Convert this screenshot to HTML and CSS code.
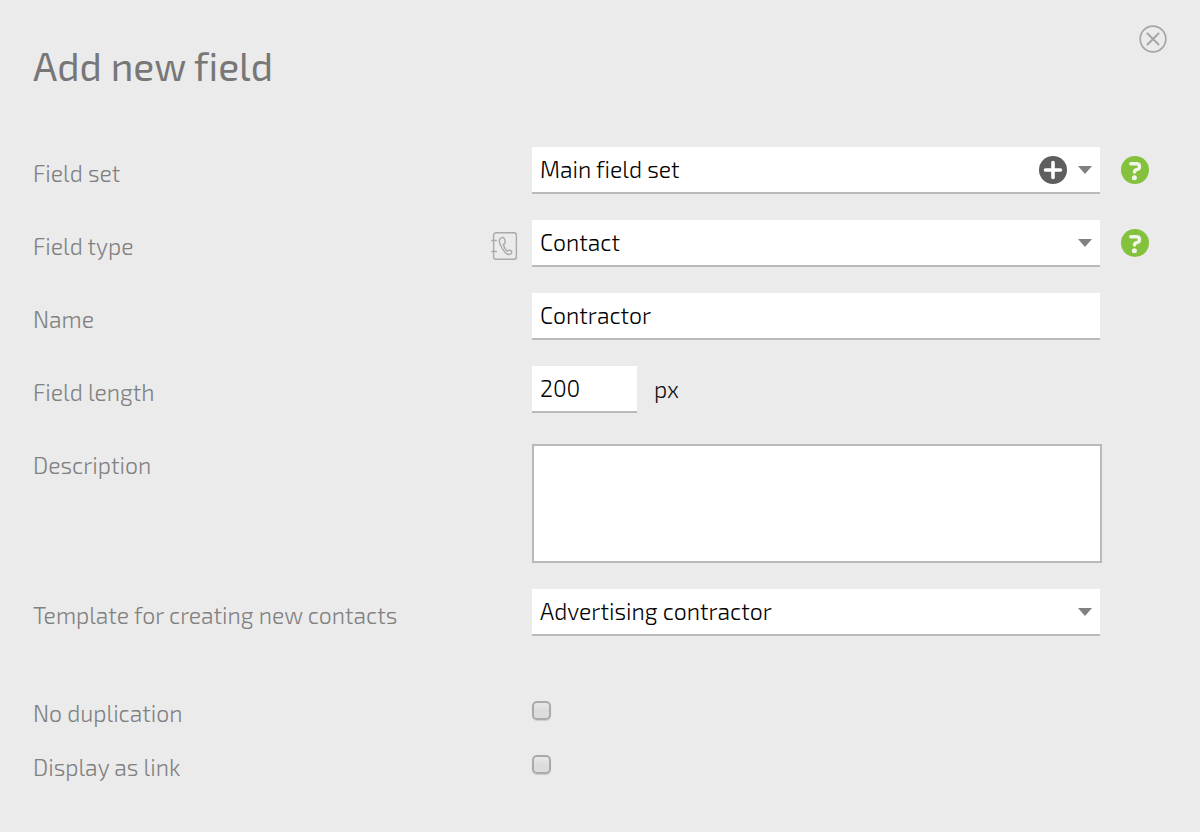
FILE: index.html
```html
<!DOCTYPE html>
<html lang="en">
<head>
<meta charset="utf-8">
<meta name="viewport" content="width=device-width, initial-scale=1">
<title>Add new field</title>
<link rel="stylesheet" href="styles.css">
</head>
<body>
<main class="dialog">
  <header class="dialog-header">
    <h1 class="dialog-title">Add new field</h1>
    <button class="icon-button" type="button" aria-label="Close">
      <svg width="28" height="28" viewBox="0 0 28 28" fill="none" stroke="#a6a6a6"><circle cx="14" cy="14" r="12.8" stroke-width="1.7"/><path d="M8.500 8.500l11 11M19.500 8.500l-11 11" stroke-width="2" stroke-linecap="round"/></svg>
    </button>
  </header>
  <form class="form">
    <div class="row">
      <div class="caption"><label for="set">Field set</label></div>
      <div class="control">
        <select class="box" id="set"><option>Main field set</option></select>
        <button class="icon-button add" type="button" aria-label="Add field set">
          <svg width="28" height="28" viewBox="0 0 28 28"><circle cx="14" cy="14" r="14" fill="#5e5e5e"/><path d="M14 6.500v15M6.500 14h15" stroke="#fff" stroke-width="3.600" stroke-linecap="round"/></svg>
        </button>
      </div>
      <button class="icon-button help" type="button" aria-label="Help on field set">
        <svg width="28" height="28" viewBox="0 0 28 28"><circle cx="14" cy="14" r="14" fill="#84c13d"/><path d="M9.800 7.700H15.300Q18.400 7.700 18.400 10.300V11Q18.400 12.800 16.500 13.300Q13.500 13.900 13.500 16" fill="none" stroke="#f2f5ec" stroke-width="3.400" stroke-linecap="round" stroke-linejoin="round"/><circle cx="13.400" cy="21.700" r="2.500" fill="#f2f5ec"/></svg>
      </button>
    </div>
    <div class="row">
      <div class="caption">
        <label for="type">Field type</label>
        <svg class="type-icon" width="27" height="28" viewBox="0 0 27 28" fill="none" stroke="#aaa" stroke-width="1.400" stroke-linecap="round" stroke-linejoin="round"><rect x="2.600" y=".8" width="22.800" height="26.400" rx="2.500"/><path d="M.8 8.500h4.500M.8 19.500h4.500"/><path d="M10.200 5.800C8.200 6.700 7.800 9 9 11.800C10.600 15.600 12.400 19.300 15.400 21.600C17.300 23 20 22.600 20.700 20.700C21 19.600 20.400 18.900 19.400 18.500C18 18 17.200 18.200 16.500 19.100C15 18.300 13 14.800 12.400 12.500C13.800 12 14.300 11.300 14.200 9.900C14.100 8.500 13.900 7.100 13.100 6.200C12.400 5.300 11.200 5.300 10.200 5.800Z"/></svg>
      </div>
      <div class="control"><select class="box" id="type"><option>Contact</option></select></div>
      <button class="icon-button help" type="button" aria-label="Help on field type">
        <svg width="28" height="28" viewBox="0 0 28 28"><circle cx="14" cy="14" r="14" fill="#84c13d"/><path d="M9.800 7.700H15.300Q18.400 7.700 18.400 10.300V11Q18.400 12.800 16.500 13.300Q13.500 13.900 13.500 16" fill="none" stroke="#f2f5ec" stroke-width="3.400" stroke-linecap="round" stroke-linejoin="round"/><circle cx="13.400" cy="21.700" r="2.500" fill="#f2f5ec"/></svg>
      </button>
    </div>
    <div class="row">
      <div class="caption"><label for="name">Name</label></div>
      <div class="control"><input class="box" id="name" type="text" value="Contractor"></div>
    </div>
    <div class="row">
      <div class="caption"><label for="length">Field length</label></div>
      <div class="control"><input class="box short" id="length" type="text" value="200"><span class="unit">px</span></div>
    </div>
    <div class="row">
      <div class="caption"><label for="description">Description</label></div>
      <div class="control"><textarea class="area" id="description"></textarea></div>
    </div>
    <div class="row">
      <div class="caption"><label for="template">Template for creating new contacts</label></div>
      <div class="control"><select class="box" id="template"><option>Advertising contractor</option></select></div>
    </div>
    <div class="options">
      <div class="row">
        <label for="unique">No duplication</label>
        <input class="check" id="unique" type="checkbox">
      </div>
      <div class="row">
        <label for="link">Display as link</label>
        <input class="check" id="link" type="checkbox">
      </div>
    </div>
  </form>
</main>
</body>
</html>
```
FILE: styles.css
```css
* { box-sizing: border-box; }

body {
  margin: 0;
  background: #ebebeb;
  color: #808080;
  font: 350 23px/28px "Exo 2", Roboto, "Noto Sans", sans-serif;
  font-variant-ligatures: none;
}

.dialog { padding: 25px 33px 32px; }

.dialog-header {
  display: flex;
  justify-content: space-between;
  align-items: flex-start;
}

.dialog-title {
  margin: 0;
  padding-top: 17px;
  color: #777;
  font-size: 39px;
  font-weight: 400;
  line-height: 48px;
}

.icon-button {
  display: block;
  width: 28px;
  height: 28px;
  padding: 0;
  border: 0;
  background: none;
  cursor: pointer;
}

.icon-button svg { display: block; }

.form {
  display: grid;
  gap: 26px;
  margin-top: 57px;
  padding-right: 18px;
}

.row {
  display: grid;
  grid-template-columns: minmax(0, 499fr) minmax(0, 568fr) 49px;
  align-items: start;
}

.caption {
  display: flex;
  justify-content: space-between;
  padding: 12px 14px 0 0;
}

.type-icon { flex: none; }

.control {
  position: relative;
  display: flex;
}

.box {
  width: 100%;
  height: 47px;
  padding: 0 8px 2px;
  border: 0;
  border-bottom: 2px solid #b9b9b9;
  border-radius: 0;
  background: #fff;
  color: #000;
  font: inherit;
  font-variant-ligatures: inherit;
}

select.box {
  appearance: none;
  padding-right: 70px;
}

.control:has(select)::after {
  content: "";
  position: absolute;
  top: 19px;
  right: 8px;
  width: 14px;
  height: 8px;
  background: #808080;
  clip-path: polygon(0 0, 100% 0, 50% 100%);
  pointer-events: none;
}

.add {
  position: absolute;
  top: 9px;
  right: 33px;
}

.help { margin: 9px 0 0 21px; }

.short { width: 105px; }

.unit {
  padding: 9px 0 0 17px;
  color: #111;
}

.area {
  flex: none;
  width: calc(100% + 2px);
  height: 119px;
  margin-top: 5px;
  padding: 8px;
  border: 2px solid #b9b9b9;
  border-radius: 0;
  background: #fff;
  color: #000;
  font: inherit;
  resize: none;
}

.options {
  display: grid;
  gap: 26px;
  padding-top: 37px;
}

.check {
  appearance: none;
  width: 19px;
  height: 19px;
  margin: 2px 0 0;
  border: 2px solid #aaa;
  border-radius: 5px;
  background: linear-gradient(#e9e9e9, #dcdcdc 50%);
  box-shadow: 0 1px 1px #ccc;
}

.check:checked { background: #777; }
```
